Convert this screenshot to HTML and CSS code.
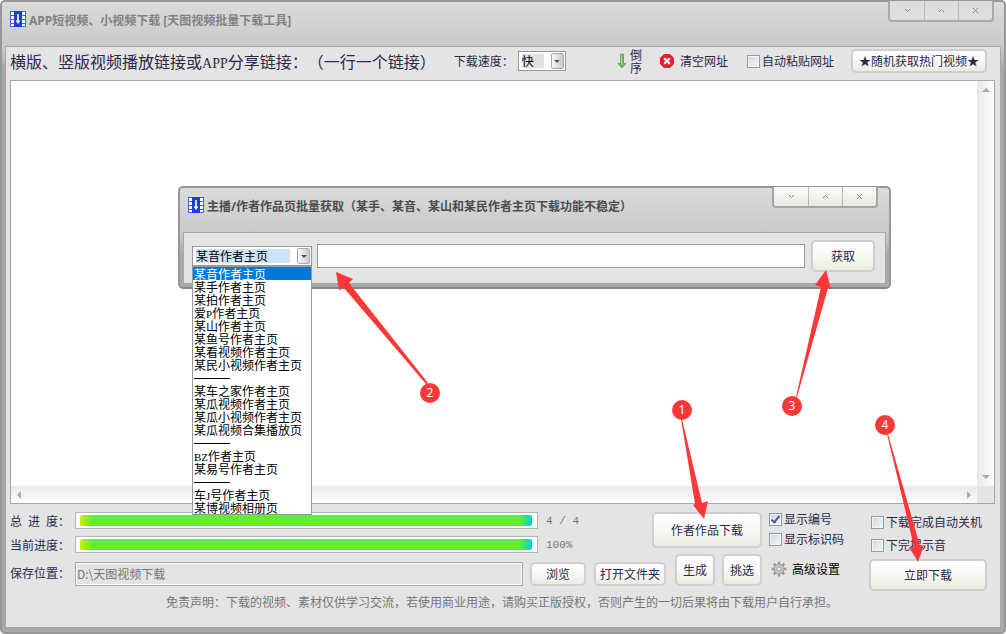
FILE: index.html
```html
<!DOCTYPE html>
<html lang="zh-CN">
<head>
<meta charset="utf-8">
<title>APP短视频、小视频下载</title>
<link rel="stylesheet" href="styles.css">
</head>
<body>
<svg class="defs" aria-hidden="true">
  <symbol id="film" viewBox="0 0 16 16">
    <rect width="16" height="16" fill="#3c66e4"/>
    <path fill="#fff" d="M1 1h3v3H1zM1 5h3v3H1zM1 9h3v3H1zM1 13h3v2H1zM12 1h3v3h-3zM12 5h3v3h-3zM12 9h3v3h-3zM12 13h3v2h-3z"/>
    <path fill="#1c3fd0" d="M4 0h8v16H4z"/>
    <path fill="#fff" d="M7.200 3h1.600v6.500h1.700L8 13 5.500 9.500h1.700z"/>
  </symbol>
  <symbol id="down" viewBox="0 0 7 7"><path d="M1 2l2.500 2.500L6 2" fill="none" stroke="#888"/></symbol>
  <symbol id="up" viewBox="0 0 7 7"><path d="M1 5l2.500-2.500L6 5" fill="none" stroke="#888"/></symbol>
  <symbol id="close" viewBox="0 0 7 7"><path d="M1 1l5 5M6 1L1 6" fill="none" stroke="#888"/></symbol>
</svg>

<div class="window">
  <header class="titlebar">
    <svg class="app-icon"><use href="#film"/></svg>
    <h1 class="title">APP短视频、小视频下载 [天图视频批量下载工具]</h1>
    <div class="controls">
      <button class="control" aria-label="最小化"><svg><use href="#down"/></svg></button>
      <button class="control" aria-label="最大化"><svg><use href="#up"/></svg></button>
      <button class="control" aria-label="关闭"><svg><use href="#close"/></svg></button>
    </div>
  </header>

  <main class="panel">
    <div class="toolbar">
      <label class="heading" for="links">横版、竖版视频播放链接或<span class="latin">APP</span>分享链接：（一行一个链接）</label>
      <label class="speed-label" for="speed">下载速度：</label>
      <span class="combo speed">
        <select id="speed"><option>快</option></select>
        <span class="combo-arrow"></span>
      </span>
      <button class="plain reverse">
        <svg class="arrow-icon" viewBox="0 0 10 16"><path d="M3.500 1h3v9.500H9L5 15 1 10.500h2.500z" fill="#6fb95c" stroke="#4c9a46" stroke-width=".7"/><path d="M4.500 1.500v10" stroke="#a6dc96"/></svg>
        <span class="stacked">倒序</span>
      </button>
      <button class="plain clear">
        <svg class="clear-icon" viewBox="0 0 14 14"><path d="M4 0h6l4 4v6l-4 4H4l-4-4V4z" fill="#e3222b"/><path d="M4.200 4.200l5.600 5.600M9.800 4.200L4.200 9.800" stroke="#fff" stroke-width="2.200"/></svg>
        清空网址
      </button>
      <label class="check"><input type="checkbox">自动粘贴网址</label>
      <button class="btn hot">★随机获取热门视频★</button>
    </div>

    <div class="editor">
      <textarea id="links" class="links"></textarea>
      <div class="bar-y"><i class="tri tri-up"></i><i class="tri tri-down"></i></div>
      <div class="bar-x"><i class="tri tri-left"></i><i class="tri tri-right"></i></div>
      <div class="corner"></div>
    </div>

    <div class="bottom">
      <div class="tasks">
        <div class="task-row">
          <div class="meters">
            <div class="meter-row">
              <span class="label">总<span class="gap"></span>进<span class="gap"></span>度：</span>
              <div class="meter" role="progressbar" aria-label="总进度" aria-valuenow="100"><div class="fill"></div></div>
              <span class="value">4 / 4</span>
            </div>
            <div class="meter-row">
              <span class="label">当前进度：</span>
              <div class="meter" role="progressbar" aria-label="当前进度" aria-valuenow="100"><div class="fill"></div></div>
              <span class="value">100%</span>
            </div>
          </div>
          <button class="btn author">作者作品下载</button>
        </div>
        <div class="path-row">
          <label class="label path-label" for="path">保存位置：</label>
          <input class="path" id="path" type="text" value="D:\天图视频下载" readonly>
          <button class="btn browse">浏览</button>
          <button class="btn open">打开文件夹</button>
          <button class="btn small">生成</button>
          <button class="btn small">挑选</button>
        </div>
      </div>
      <div class="options">
        <label class="check"><input type="checkbox" checked>显示编号</label>
        <label class="check"><input type="checkbox">显示标识码</label>
        <button class="plain advanced">
          <svg class="gear" viewBox="0 0 16 16"><path d="M8 .5v15M.5 8h15M2.700 2.700l10.600 10.600M13.300 2.700L2.700 13.300" stroke="#9a9a9a" stroke-width="2.400"/><circle cx="8" cy="8" r="5" fill="#c6c6c6" stroke="#9a9a9a"/><circle cx="8" cy="8" r="2.200" fill="#eee" stroke="#9a9a9a"/></svg>
          高级设置
        </button>
      </div>
      <div class="finish">
        <label class="check"><input type="checkbox">下载完成自动关机</label>
        <label class="check"><input type="checkbox">下完提示音</label>
        <button class="btn start">立即下载</button>
      </div>
    </div>
    <p class="notice">免责声明：下载的视频、素材仅供学习交流，若使用商业用途，请购买正版授权，否则产生的一切后果将由下载用户自行承担。</p>
  </main>
</div>

<section class="dialog" role="dialog" aria-labelledby="dialog-title">
  <header class="titlebar">
    <svg class="app-icon"><use href="#film"/></svg>
    <h2 class="title" id="dialog-title">主播/作者作品页批量获取（某手、某音、某山和某民作者主页下载功能不稳定）</h2>
    <div class="controls light">
      <button class="control" aria-label="最小化"><svg><use href="#down"/></svg></button>
      <button class="control" aria-label="最大化"><svg><use href="#up"/></svg></button>
      <button class="control" aria-label="关闭"><svg><use href="#close"/></svg></button>
    </div>
  </header>
  <div class="panel dialog-body">
    <div class="combo source">
      <select aria-label="主页类型"><option>某音作者主页</option></select>
      <span class="combo-arrow"></span>
      <ul class="list" role="listbox" aria-label="主页类型">
        <li role="option" aria-selected="true" class="selected">某音作者主页</li>
        <li role="option">某手作者主页</li>
        <li role="option">某拍作者主页</li>
        <li role="option">爱<span class="latin">P</span>作者主页</li>
        <li role="option">某山作者主页</li>
        <li role="option">某鱼号作者主页</li>
        <li role="option">某看视频作者主页</li>
        <li role="option">某民小视频作者主页</li>
        <li role="option" class="rule">———</li>
        <li role="option">某车之家作者主页</li>
        <li role="option">某瓜视频作者主页</li>
        <li role="option">某瓜小视频作者主页</li>
        <li role="option">某瓜视频合集播放页</li>
        <li role="option" class="rule">———</li>
        <li role="option"><span class="latin">BZ</span>作者主页</li>
        <li role="option">某易号作者主页</li>
        <li role="option" class="rule">———</li>
        <li role="option">车<span class="latin">J</span>号作者主页</li>
        <li role="option">某博视频相册页</li>
      </ul>
    </div>
    <input class="address" type="text" aria-label="主页地址">
    <button class="btn fetch">获取</button>
  </div>
</section>

<svg class="guides" viewBox="0 0 1006 634">
  <g fill="#fb3838">
    <path d="M681 419L695 504 693 505 704 519 708 501 702 503 682 419z"/>
    <path d="M426 384L344 288 339 290 336 272 353 279 349 283 428 383z"/>
    <path d="M796 397L821 287 815 285 826 270 831 289 828 288 797 397z"/>
    <path d="M887 434L914 547 909 547 918 562 924 545 920 546 888 434z"/>
    <circle cx="682" cy="410" r="10"/>
    <circle cx="430" cy="393" r="10"/>
    <circle cx="792" cy="406" r="10"/>
    <circle cx="885" cy="425" r="10"/>
  </g>
  <g class="numbers">
    <text x="682" y="414">1</text>
    <text x="430" y="397">2</text>
    <text x="792" y="410">3</text>
    <text x="885" y="429">4</text>
  </g>
</svg>
</body>
</html>
```

FILE: styles.css
```css
*, ::after { box-sizing: border-box; }

body {
  margin: 0;
  background: #fff;
  color: #2a2a4c;
  font: 12px/14px "Noto Sans CJK SC", sans-serif;
  text-spacing-trim: space-all;
}

button, input, select, textarea { font: inherit; color: inherit; margin: 0; }

.defs { position: absolute; width: 0; height: 0; }

.window, .dialog {
  display: flex;
  flex-direction: column;
  border: 2px solid #979797;
  border-radius: 5px;
  background: linear-gradient(#dbdbdb, #c8c8c8 48px, #a9a9a9 66px);
}

.window {
  min-height: 100vh;
  padding: 0 3px 4px;
}

.titlebar {
  display: flex;
  align-items: flex-start;
  height: 44px;
  padding-left: 5px;
}

.app-icon {
  width: 16px;
  height: 16px;
  margin-top: 9px;
}

.title {
  flex: 1;
  margin: 12px 0 0 3px;
  color: #828282;
  font: bold 12px/14px "Noto Sans", "Noto Sans CJK SC", sans-serif;
}

.controls {
  display: flex;
  margin: -1px 7px 0 0;
  border: 2px solid #aaa;
  border-top: 0;
  border-radius: 0 0 4px 4px;
  background: #dedede;
}

.control {
  display: flex;
  align-items: center;
  justify-content: center;
  width: 34px;
  height: 19px;
  padding: 0;
  border: 0;
  background: none;
}

.control + .control { border-left: 1px solid #bbb; }
.control svg { width: 7px; height: 7px; }
.light { background: linear-gradient(#fafaf8, #e9e9e2); border-color: #a5a5a5; }

.panel {
  flex: 1;
  display: flex;
  flex-direction: column;
  border: 1px solid #a6a6a6;
  background: #e4e4e4;
}

.toolbar {
  display: flex;
  align-items: center;
  height: 33px;
  padding: 0 13px 5px 4px;
}

.heading { font-size: 16px; line-height: 20px; white-space: nowrap; }
.latin { font: 11px/12px "Liberation Serif", serif; }
.heading .latin { font-size: 14px; }
.speed-label { margin-left: 18px; white-space: nowrap; }

.combo {
  display: block;
  position: relative;
  height: 20px;
  border: 1px solid #999;
  background: #fff;
}

.combo select {
  appearance: none;
  display: block;
  width: 100%;
  height: 18px;
  padding: 0 20px 0 2px;
  border: 2px solid #fff;
  border-width: 2px 1px;
  background: #e1e1e1 content-box;
  color: #000;
  line-height: 14px;
}

.combo-arrow {
  position: absolute;
  top: 1px;
  right: 1px;
  width: 13px;
  height: 16px;
  border: 1px solid #aaa;
  border-radius: 2px;
  background: linear-gradient(90deg, #fafafa, #c9c9c9);
  pointer-events: none;
}

.combo-arrow::after {
  content: "";
  display: block;
  width: 6px;
  margin: 6px auto 0;
  border: 3px solid transparent;
  border-top-color: #555;
  border-bottom: 0;
}

.speed { width: 48px; margin-left: 4px; }
.source { width: 120px; }
.source select { background-color: #cce4f7; }

.plain {
  display: flex;
  align-items: center;
  padding: 0;
  border: 0;
  background: none;
}

.reverse { margin-left: auto; gap: 3px; }
.arrow-icon { width: 10px; height: 16px; }
.stacked { width: 12px; line-height: 13px; }
.clear { gap: 6px; margin-left: 18px; }
.clear-icon { width: 14px; height: 14px; }
.toolbar .check { margin-left: 19px; }

.check {
  display: flex;
  align-items: center;
  gap: 2px;
  white-space: nowrap;
}

.check input {
  appearance: none;
  width: 13px;
  height: 13px;
  border: 1px solid #8f9ba8;
  background: linear-gradient(135deg, #ccd6de, #f5f7f8);
  box-shadow: inset 0 0 0 1px #f2f4f5;
}

.check input:checked::after {
  content: "";
  display: block;
  width: 5px;
  height: 9px;
  margin: 0 0 0 3px;
  border: solid #44579c;
  border-width: 0 2px 2px 0;
  transform: rotate(38deg);
}

.btn {
  flex: none;
  padding: 0;
  border: 2px solid #cfcfcf;
  border-radius: 5px;
  background: linear-gradient(#fff, #f6f6f1 60%, #ebebdf);
  text-align: center;
  white-space: nowrap;
}

.hot { width: 136px; height: 24px; margin-left: 17px; }

.editor {
  flex: 1;
  display: grid;
  grid-template-columns: 1fr 17px;
  grid-template-rows: 1fr 17px;
  margin: 0 5px 0 4px;
  border: 1px solid #a6a6a6;
  background: #fff;
}

.links {
  width: 100%;
  height: 100%;
  padding: 4px;
  border: 0;
  outline: 0;
  resize: none;
  background: #fff;
}

.bar-y, .bar-x {
  display: flex;
  justify-content: space-between;
  align-items: center;
}

.bar-y { flex-direction: column; padding: 7px 0; background: linear-gradient(90deg, #e9e9e9, #fdfdfd); }
.bar-x { padding: 0 6px; background: linear-gradient(#e9e9e9, #fdfdfd); }
.corner { background: #e4e4e4; }
.tri { border: 4px solid transparent; }
.tri-up { border-top: 0; border-bottom-color: #aaa; }
.tri-down { border-bottom: 0; border-top-color: #aaa; }
.tri-left { border-left: 0; border-right-color: #aaa; }
.tri-right { border-right: 0; border-left-color: #aaa; }

.bottom {
  display: flex;
  padding: 8px 13px 0 4px;
}

.tasks { flex: 1; }
.task-row { display: flex; align-items: flex-start; height: 42px; }
.meters { flex: 1; display: grid; gap: 7px; }
.meter-row { display: flex; align-items: center; height: 17px; }
.label { width: 65px; white-space: nowrap; }
.gap { display: inline-block; width: 6px; }

.meter {
  flex: 1;
  height: 17px;
  padding: 2px 5px 2px 4px;
  border: 1px solid #b5b5b5;
  background: #fff;
}

.fill {
  height: 11px;
  border-radius: 2px;
  background: linear-gradient(90deg, #cdf000, #62ee2e 12px, #62ee2e calc(100% - 12px), #06cdec);
}

.value {
  width: 114px;
  padding-left: 8px;
  color: #777;
  font: 11px/12px "Liberation Mono", monospace;
}

.author { width: 110px; height: 36px; }
.path-row { display: flex; align-items: flex-end; }
.path-label { margin-bottom: 6px; }

.path {
  flex: 1;
  min-width: 0;
  height: 24px;
  padding: 0 1px 2px;
  border: 1px solid #aaa;
  background: #e4e4e4;
  box-shadow: inset 0 0 0 1px #fafafa;
  color: #777;
}

.browse { width: 56px; height: 24px; margin-left: 7px; }
.open { width: 72px; height: 24px; margin-left: 8px; }
.small { width: 40px; height: 32px; margin-left: 9px; }
.small + .small { margin-left: 7px; }

.options {
  display: flex;
  flex-direction: column;
  gap: 6px;
  width: 107px;
  padding-left: 7px;
}

.advanced { gap: 5px; padding: 9px 0 0 2px; color: #000; }
.gear { width: 16px; height: 16px; }
.finish { display: flex; flex-direction: column; gap: 9px; width: 118px; padding-top: 3px; }
.finish .check { padding-left: 2px; }
.start { height: 32px; margin-top: -2px; }

.notice {
  margin: 4px 160px 18px;
  color: #777;
  line-height: 14px;
  white-space: nowrap;
}

.dialog {
  position: absolute;
  left: 178px;
  top: 186px;
  width: 713px;
  padding: 0 3px 3px;
  border-bottom-color: #888;
}

.dialog .title { color: #4c4c4c; }
.dialog .controls { margin-right: 8px; }

.dialog-body {
  flex-direction: row;
  align-items: center;
  min-height: 52px;
  padding: 0 10px 5px 8px;
}

.address {
  flex: 1;
  min-width: 0;
  height: 24px;
  margin: 0 6px 0 5px;
  border: 1px solid #999;
  background: #fff;
}

.fetch { width: 64px; height: 32px; }

.list {
  position: absolute;
  top: 19px;
  left: -1px;
  width: 120px;
  margin: 0;
  padding: 0;
  border: 1px solid #999;
  background: #fff;
  color: #000;
  list-style: none;
}

.list li { height: 13px; padding-left: 1px; line-height: 13px; white-space: nowrap; }
.list .rule { font-family: "Liberation Serif", serif; font-weight: bold; }
.list .selected { background: #0078d7; color: #fff; }

.guides {
  position: absolute;
  left: 0;
  top: 0;
  width: 1006px;
  height: 634px;
  pointer-events: none;
}

.numbers { fill: #fff; text-anchor: middle; font: 12px "Noto Sans", sans-serif; }
```
